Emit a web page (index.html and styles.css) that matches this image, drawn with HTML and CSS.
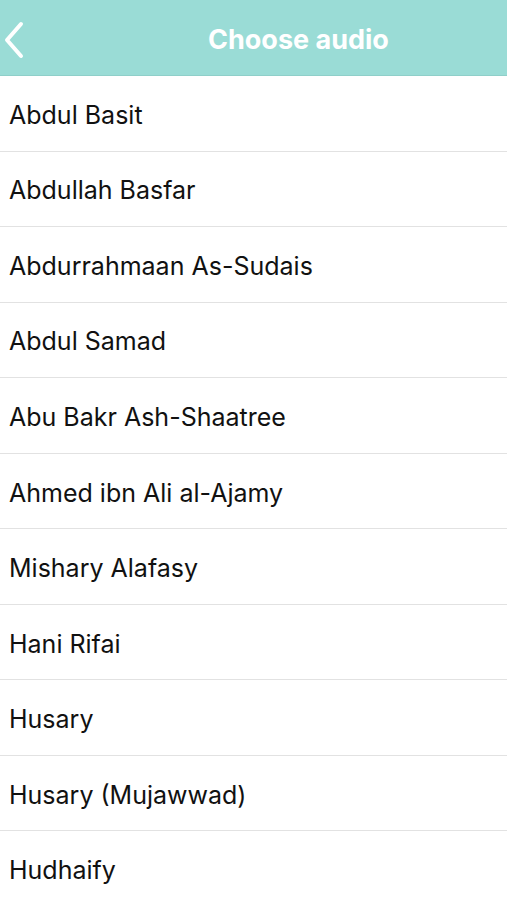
FILE: index.html
```html
<!DOCTYPE html>
<html lang="en">
<head>
  <meta charset="UTF-8">
  <meta name="viewport" content="width=device-width, initial-scale=1.0">
  <title>Choose audio</title>
  <link rel="stylesheet" href="styles.css">
</head>
<body>
  <div class="header">
    <a href="#" class="back">
      <svg width="24" height="38" viewBox="0 0 24 38">
        <path d="M20 3 L6 19 L20 35" fill="none" stroke="#fff" stroke-width="4" stroke-linecap="round" stroke-linejoin="round"/>
      </svg>
    </a>
    <h1>Choose audio</h1>
  </div>

  <ul class="reciters">
    <li>Abdul Basit</li>
    <li>Abdullah Basfar</li>
    <li>Abdurrahmaan As-Sudais</li>
    <li>Abdul Samad</li>
    <li>Abu Bakr Ash-Shaatree</li>
    <li>Ahmed ibn Ali al-Ajamy</li>
    <li>Mishary Alafasy</li>
    <li>Hani Rifai</li>
    <li>Husary</li>
    <li>Husary (Mujawwad)</li>
    <li>Hudhaify</li>
  </ul>
</body>
</html>
```

FILE: styles.css
```css
body {
  margin: 0;
  padding: 0;
  font-family: Inter, "Liberation Sans", sans-serif;
  background-color: #fff;
  overflow: hidden;
}
.header {
  height: 76px;
  box-sizing: border-box;
  background-color: #9adcd6;
  border-bottom: 1px solid #8fcfc9;
  display: flex;
  align-items: center;
  padding-top: 4px;
}
.back {
  display: flex;
  padding-left: 1px;
  width: 24px;
}
.header h1 {
  margin: 0 0 0 183px;
  font-size: 27px;
  font-weight: 700;
  color: #fff;
}
.reciters {
  list-style: none;
  margin: 0;
  padding: 0;
}
.reciters li {
  height: 75.56px;
  box-sizing: border-box;
  border-bottom: 1px solid #e2e2e2;
  display: flex;
  align-items: center;
  padding-left: 9px;
  padding-top: 3px;
  font-size: 25px;
  color: #111;
}
```
